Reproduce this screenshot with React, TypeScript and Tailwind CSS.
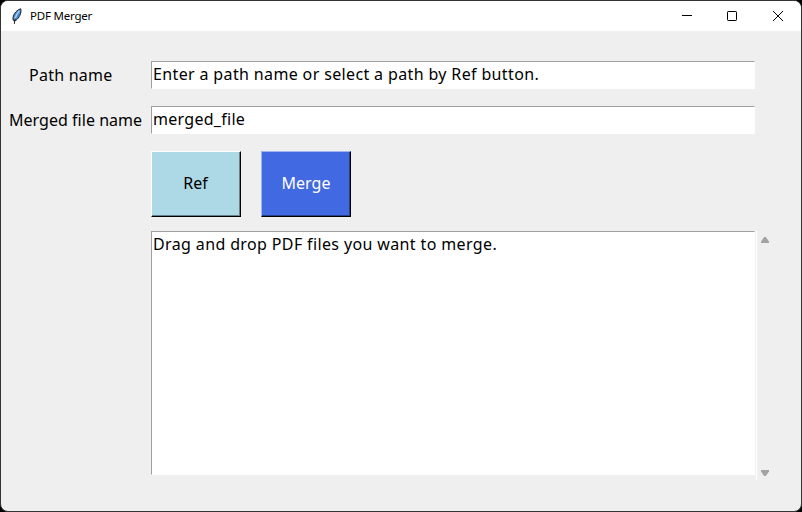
import React from "react";

const fieldBorder = "border border-t-[#a0a0a0] border-l-[#a0a0a0] border-r-white border-b-white bg-white";

function Feather() {
  return (
    <svg className="ml-[10px] shrink-0" width="12" height="17" viewBox="0 0 12 17">
      <path d="M9.8 0.8C6.2 1.6 2.6 5.6 2 9.5L2.2 12.3L5 12.3C8.4 9.7 10.6 5 9.8 0.8Z" fill="#4b8bd0" stroke="#17202e" strokeWidth="1" />
      <path d="M8.3 2.6C6.2 5.5 4.6 8.3 3.6 11.5" fill="none" stroke="#b7d9f7" strokeWidth="1.1" />
      <path d="M4.2 10.5L3.3 15.8" fill="none" stroke="#101010" strokeWidth="1" />
    </svg>
  );
}

function TitleBar() {
  return (
    <header className="flex h-[30px] shrink-0 items-center bg-white">
      <Feather />
      <span className="ml-[7px] text-[11.5px] leading-[16px] whitespace-nowrap tracking-[-0.2px]">PDF Merger</span>
      <div className="ml-auto flex h-full">
        <div className="flex w-[44px] items-center justify-center">
          <svg width="10" height="10" viewBox="0 0 10 10"><path d="M0 4.5H10" stroke="#000" /></svg>
        </div>
        <div className="flex w-[46px] items-center justify-center">
          <svg width="10" height="10" viewBox="0 0 10 10"><rect x="0.5" y="0.5" width="9" height="9" rx="0.7" fill="none" stroke="#000" /></svg>
        </div>
        <div className="flex w-[46px] items-center justify-center">
          <svg width="10" height="10" viewBox="0 0 10 10"><path d="M0 0L10 10M10 0L0 10" stroke="#000" /></svg>
        </div>
      </div>
    </header>
  );
}

function Field({ label, labelClass, value, valueClass }: { label: string; labelClass: string; value: string; valueClass: string }) {
  return (
    <div className="flex h-7">
      <div className="flex w-[150px] items-center">
        <span className={"whitespace-nowrap leading-[24px] " + labelClass}>{label}</span>
      </div>
      <div className={"flex w-[604px] items-start pl-px " + fieldBorder}>
        <span className={"whitespace-nowrap leading-[24px] " + valueClass}>{value}</span>
      </div>
    </div>
  );
}

export default function App() {
  return (
    <div className="h-[512px] w-[802px] overflow-hidden bg-black font-['Noto_Sans',sans-serif] text-[16px] text-black">
      <div className="flex h-[512px] w-[802px] flex-col overflow-hidden rounded-[8px] border border-[#333] bg-[#efefef]">
        <TitleBar />
        <main className="pt-[30px]">
          <Field label="Path name" labelClass="ml-[28px] tracking-[0.25px]" value="Enter a path name or select a path by Ref button." valueClass="tracking-[0.36px]" />
          <div className="h-[17px]" />
          <Field label="Merged file name" labelClass="ml-[8px] tracking-[0.03px]" value="merged_file" valueClass="tracking-[0.28px]" />
          <div className="mt-[17px] ml-[150px] flex gap-5">
            <button className="h-[66px] w-[90px] border border-t-white border-l-white border-r-black border-b-black bg-[#add8e6] text-black">
              <span className="flex h-full w-full items-center justify-center border-r border-b border-[#688189] pb-[2px]">Ref</span>
            </button>
            <button className="h-[66px] w-[90px] border border-t-[#a0b4f0] border-l-[#a0b4f0] border-r-black border-b-black bg-[#4169e1] text-white">
              <span className="flex h-full w-full items-center justify-center border-r border-b border-[#273f87] pb-[2px] pl-px">Merge</span>
            </button>
          </div>
          <div className="mt-[14px] ml-[150px] flex h-[249px]">
            <div className={"h-[244px] w-[604px] pl-px " + fieldBorder}>
              <span className="block whitespace-nowrap leading-[24px] tracking-[0.37px]">Drag and drop PDF files you want to merge.</span>
            </div>
            <div className="ml-px flex w-[14px] flex-col items-center justify-between border-l border-white pt-[6px] pb-[4px]">
              <svg className="ml-[3px]" width="8" height="6" viewBox="0 0 8 6"><path d="M3.2 0H4.8L8 4.4V6H0V4.4Z" fill="#a3a3a3" /></svg>
              <svg className="ml-[3px]" width="8" height="6" viewBox="0 0 8 6"><path d="M3.2 6H4.8L8 1.6V0H0V1.6Z" fill="#a3a3a3" /></svg>
            </div>
          </div>
        </main>
      </div>
    </div>
  );
}
